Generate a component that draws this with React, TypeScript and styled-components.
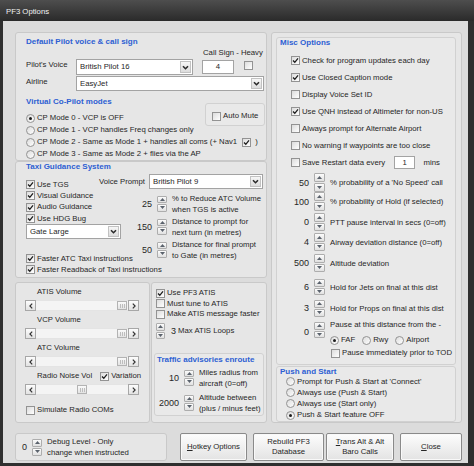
import React from 'react'
import styled, { createGlobalStyle } from 'styled-components'

const GlobalStyle = createGlobalStyle`
  html, body { margin: 0; padding: 0; background: #2f2f2f; }
  * { box-sizing: border-box; }
`

const Window = styled.div`
  width: 474px;
  height: 466px;
  display: flex;
  flex-direction: column;
  background: #2f2f2f;
  font: 7.75px/10px "Liberation Sans", Arial, sans-serif;
  color: #262626;
  overflow: hidden;
`

const TitleBar = styled.div`
  height: 21px;
  flex: none;
  padding: 1px 0 0 6px;
  line-height: 21px;
  color: #f2f2f2;
  background: linear-gradient(#4e4e4e, #2a2a2a);
`

const Client = styled.div`
  flex: 1;
  margin: 0 6px 3px 3px;
  padding: 11px 6px 2px 12px;
  background: #dcdcdc;
  display: flex;
  flex-direction: column;
  gap: 10px;
`

const MainRow = styled.div`
  height: 391px;
  flex: none;
  display: flex;
  gap: 4px;
`

const LeftCol = styled.div`
  width: 253px;
  display: flex;
  flex-direction: column;
`

const Panel = styled.div<{ $pad?: string }>`
  background: #e6e6e6;
  border: 1px solid #c9c9c9;
  border-radius: 3px;
  padding: ${p => p.$pad ?? '0'};
`

const Group = styled.div`
  background: #e9e9e9;
  border: 1px solid #d1d1d1;
  border-radius: 3px;
`

const Heading = styled.div`
  font-weight: bold;
  font-size: 8px;
  line-height: 10px;
  color: #2d5fd3;
  white-space: nowrap;
`

/* ---------- small controls ---------- */

const Box = styled.span<{ $round?: boolean; $ml?: number; $mt?: number }>`
  width: 9px;
  height: 9px;
  flex: none;
  display: flex;
  align-items: center;
  justify-content: center;
  border: 1px solid #939393;
  border-radius: ${p => (p.$round ? '50%' : '0')};
  background: linear-gradient(135deg, #dcdcdc, #ffffff);
  margin-left: ${p => p.$ml ?? 0}px;
  margin-top: ${p => p.$mt ?? 0}px;
`

const Dot = styled.span`
  width: 3px;
  height: 3px;
  border-radius: 50%;
  background: #1c1c1c;
`

const Tick = () => (
  <svg width="7" height="7" viewBox="0 0 7 7">
    <path d="M1 3.5L2.8 5.3L6 1.3" stroke="#1c1c1c" strokeWidth="1.3" fill="none" />
  </svg>
)

const CheckBox = ({ on, ml, mt }: { on?: boolean; ml?: number; mt?: number }) => (
  <Box $ml={ml} $mt={mt}>{on && <Tick />}</Box>
)

const RadioBtn = ({ on }: { on?: boolean }) => <Box $round>{on && <Dot />}</Box>

const OptLine = styled.div<{ $h?: number; $ml?: number; $mt?: number }>`
  display: flex;
  align-items: center;
  gap: 2px;
  white-space: nowrap;
  height: ${p => (p.$h ? `${p.$h}px` : 'auto')};
  margin-left: ${p => p.$ml ?? 0}px;
  margin-top: ${p => p.$mt ?? 0}px;
`

const Check = ({ on, h, ml, mt, children }: { on?: boolean; h?: number; ml?: number; mt?: number; children: React.ReactNode }) => (
  <OptLine $h={h} $ml={ml} $mt={mt}>
    <CheckBox on={on} />
    <span>{children}</span>
  </OptLine>
)

const Radio = ({ on, h, ml, children }: { on?: boolean; h?: number; ml?: number; children: React.ReactNode }) => (
  <OptLine $h={h} $ml={ml}>
    <RadioBtn on={on} />
    <span>{children}</span>
  </OptLine>
)

const SelectBox = styled.div<{ $w: number; $h: number }>`
  width: ${p => p.$w}px;
  height: ${p => p.$h}px;
  flex: none;
  display: flex;
  background: #fff;
  border: 1px solid #a3a3a3;
`

const SelectText = styled.span`
  flex: 1;
  padding-left: 3px;
  display: flex;
  align-items: center;
  white-space: nowrap;
`

const SelectBtn = styled.span`
  width: 11px;
  margin: 1px;
  display: flex;
  align-items: center;
  justify-content: center;
  border: 1px solid #c2c2c2;
  background: linear-gradient(#f7f7f7, #dcdcdc);
`

const Select = ({ w, h = 15, children }: { w: number; h?: number; children: React.ReactNode }) => (
  <SelectBox $w={w} $h={h}>
    <SelectText>{children}</SelectText>
    <SelectBtn>
      <svg width="7" height="5" viewBox="0 0 7 5">
        <path d="M1 1.2L3.5 3.7L6 1.2" stroke="#2a2a2a" strokeWidth="1.6" fill="none" />
      </svg>
    </SelectBtn>
  </SelectBox>
)

const TextBox = styled.div<{ $w: number; $h: number; $ml?: number; $mt?: number }>`
  width: ${p => p.$w}px;
  height: ${p => p.$h}px;
  flex: none;
  margin-left: ${p => p.$ml ?? 0}px;
  margin-top: ${p => p.$mt ?? 0}px;
  background: #fff;
  border: 1px solid #a3a3a3;
  text-align: center;
  line-height: ${p => p.$h - 2}px;
`

const SpinBox = styled.div<{ $w: number; $h: number; $mt?: number }>`
  width: ${p => p.$w}px;
  height: ${p => p.$h}px;
  margin-top: ${p => p.$mt ?? 0}px;
  display: flex;
  flex-direction: column;
  gap: 1px;
`

const SpinBtn = styled.div`
  flex: 1;
  display: flex;
  align-items: center;
  justify-content: center;
  border: 1px solid #adadad;
  border-radius: 1px;
  background: linear-gradient(#fcfcfc, #e0e0e0);
`

const Spinner = ({ w = 10, h = 16, mt }: { w?: number; h?: number; mt?: number }) => (
  <SpinBox $w={w} $h={h} $mt={mt}>
    <SpinBtn>
      <svg width="5" height="3" viewBox="0 0 5 3"><path d="M0 3L2.5 0L5 3Z" fill="#5a626c" /></svg>
    </SpinBtn>
    <SpinBtn>
      <svg width="5" height="3" viewBox="0 0 5 3"><path d="M0 0L2.5 3L5 0Z" fill="#5a626c" /></svg>
    </SpinBtn>
  </SpinBox>
)

const SpinRow = styled.div<{ $vw: number; $h: number; $mt?: number }>`
  display: grid;
  grid-template-columns: ${p => p.$vw}px auto 1fr;
  column-gap: 5px;
  align-items: center;
  height: ${p => p.$h}px;
  margin-top: ${p => p.$mt ?? 0}px;
`

const SpinValue = styled.span<{ $mt?: number }>`
  text-align: right;
  font-size: 9px;
  line-height: 10px;
  margin-top: ${p => p.$mt ?? 0}px;
`

const SpinText = styled.span`
  line-height: 11px;
  white-space: nowrap;
`

const Scroll = styled.div`
  height: 11px;
  display: flex;
  background: #f4f4f4;
`

const ScrollBtn = styled.span`
  width: 11px;
  flex: none;
  display: flex;
  align-items: center;
  justify-content: center;
  border: 1px solid #a7a7a7;
  background: linear-gradient(#fdfdfd, #e2e2e2);
`

const Track = styled.span`
  flex: 1;
  display: flex;
  align-items: center;
  border-top: 1px solid #e4e4e4;
  border-bottom: 1px solid #e4e4e4;
`

const Thumb = styled.span<{ $pos: number }>`
  width: 10px;
  height: 9px;
  flex: none;
  margin-left: calc((100% - 10px) * ${p => p.$pos});
  display: flex;
  align-items: center;
  justify-content: center;
  border: 1px solid #b3b3b3;
  background: linear-gradient(#fafafa, #e3e3e3);
`

const ScrollBar = ({ pos }: { pos: number }) => (
  <Scroll>
    <ScrollBtn>
      <svg width="4" height="6" viewBox="0 0 4 6"><path d="M3.2 0.6L0.9 3L3.2 5.4" stroke="#333" strokeWidth="1.2" fill="none" /></svg>
    </ScrollBtn>
    <Track>
      <Thumb $pos={pos}>
        <svg width="5" height="4" viewBox="0 0 5 4">
          <path d="M0.5 0V4M2.5 0V4M4.5 0V4" stroke="#bdbdbd" strokeWidth="1" />
        </svg>
      </Thumb>
    </Track>
    <ScrollBtn>
      <svg width="4" height="6" viewBox="0 0 4 6"><path d="M0.8 0.6L3.1 3L0.8 5.4" stroke="#333" strokeWidth="1.2" fill="none" /></svg>
    </ScrollBtn>
  </Scroll>
)

/* ---------- pilot / vcp panel ---------- */

const CallSignLabel = styled.div`
  margin: 1px 0 0 177px;
  white-space: nowrap;
`

const FieldRow = styled.div<{ $mt?: number }>`
  display: flex;
  align-items: flex-start;
  margin-top: ${p => p.$mt ?? 0}px;
`

const FieldLabel = styled.span`
  width: 50px;
  flex: none;
  padding-top: 1px;
  white-space: nowrap;
`

const VcpGrid = styled.div`
  display: grid;
  grid-template-columns: 1fr 60px;
  grid-template-rows: 15px repeat(4, 12px);
  margin-top: 6px;
`

const AutoMuteBox = styled(Group)`
  grid-column: 2;
  grid-row: 1 / 3;
  align-self: start;
  margin-top: 6px;
  height: 23px;
  display: flex;
  align-items: center;
  gap: 2px;
  padding: 3px 0 0 6px;
`

const ModeRow = styled.div<{ $row: number; $full?: boolean }>`
  grid-row: ${p => p.$row};
  grid-column: ${p => (p.$full ? '1 / 3' : '1')};
  display: flex;
  align-items: center;
  gap: 2px;
  white-space: nowrap;
`

/* ---------- taxi panel ---------- */

const TaxiGrid = styled.div`
  display: grid;
  grid-template-columns: 107px 1fr;
  grid-template-rows: 15px auto;
  margin-top: 2px;
`

const TaxiChecks = styled.div`
  grid-column: 1 / 3;
  grid-row: 1 / 3;
  padding-top: 5px;
  display: flex;
  flex-direction: column;
`

const VoiceRow = styled.div`
  grid-column: 1 / 3;
  grid-row: 1;
  justify-self: end;
  display: flex;
  align-items: center;
  gap: 4px;
  white-space: nowrap;
`

const TaxiSpins = styled.div`
  grid-column: 2;
  grid-row: 2;
  padding-top: 3px;
`

/* ---------- lower panels ---------- */

const LowerRow = styled.div`
  flex: 1;
  margin-top: 4px;
  display: flex;
  gap: 1px;
`

const VolumePanel = styled(Panel)`
  width: 135px;
  flex: none;
  padding: 4px 10px 0 9px;
  display: flex;
  flex-direction: column;
`

const VolLabel = styled.div<{ $mt?: number }>`
  margin: ${p => p.$mt ?? 0}px 0 3px 12px;
  height: 10px;
  white-space: nowrap;
`

const NoiseRow = styled.div`
  display: flex;
  align-items: center;
  gap: 8px;
  margin: 4px 0 3px 12px;
  height: 10px;
  white-space: nowrap;
`

const AtisPanel = styled(Panel)`
  flex: 1;
  padding: 5px 2px 0 2px;
  display: flex;
  flex-direction: column;
`

const LoopsRow = styled.div`
  display: flex;
  align-items: center;
  margin: 3px 0 0 2px;
  height: 17px;
  white-space: nowrap;
`

const LoopsValue = styled.span`
  font-size: 9px;
  margin: 0 2px 0 6px;
`

const TrafficBox = styled(Group)`
  margin-top: 13px;
  height: 63px;
  padding: 1px 2px 0 2px;
`

/* ---------- right side ---------- */

const RightPanel = styled(Panel)`
  flex: 1;
  padding: 4px 5px 0 4px;
  display: flex;
  flex-direction: column;
  gap: 1px;
`

const MiscGroup = styled(Group)`
  flex: 1;
  padding: 0 3px;
`

const MiscList = styled.div`
  margin: 4px 0 0 11px;
`

const PauseBlock = styled.div`
  display: grid;
  grid-template-columns: 29px auto 1fr;
  column-gap: 5px;
  align-items: start;
  margin-top: 2px;
`

const PauseStack = styled.div`
  display: flex;
  flex-direction: column;
  white-space: nowrap;
`

const RadioLine = styled.div`
  display: flex;
  gap: 7px;
  margin-top: 5px;
`

const PushGroup = styled(Group)`
  height: 56px;
  flex: none;
  padding: 0 3px;
`

const PushHeading = styled(Heading)`
  line-height: 9px;
`

/* ---------- bottom row ---------- */

const BottomRow = styled.div`
  height: 28px;
  flex: none;
  display: flex;
`

const DebugPanel = styled(Panel)`
  width: 152px;
  flex: none;
  padding: 0 4px;
  display: flex;
  align-items: center;
`

const Btn = styled.div<{ $w: number; $ml: number }>`
  width: ${p => p.$w}px;
  margin-left: ${p => p.$ml}px;
  flex: none;
  display: flex;
  align-items: center;
  justify-content: center;
  text-align: center;
  line-height: 10px;
  border: 1px solid #8a8a8a;
  border-radius: 2px;
  background: linear-gradient(#fdfdfd, #e3e3e3);
  box-shadow: inset 0 0 0 1px #f9f9f9;
`

const U = styled.span`
  text-decoration: underline;
`

export default function App() {
  return (
    <>
      <GlobalStyle />
      <Window>
        <TitleBar>PF3 Options</TitleBar>
        <Client>
          <MainRow>
            <LeftCol>
              <Panel $pad="4px 1px 0 10px">
                <Heading>Default Pilot voice &amp; call sign</Heading>
                <CallSignLabel>Call Sign - Heavy</CallSignLabel>
                <FieldRow $mt={1}>
                  <FieldLabel>Pilot's Voice</FieldLabel>
                  <Select w={117} h={16}>British Pilot 16</Select>
                  <TextBox $w={32} $h={14} $ml={9} $mt={1}>4</TextBox>
                  <CheckBox ml={10} mt={2} />
                </FieldRow>
                <FieldRow $mt={1}>
                  <FieldLabel>Airline</FieldLabel>
                  <Select w={188}>EasyJet</Select>
                </FieldRow>
                <VcpGrid>
                  <Heading>Virtual Co-Pilot modes</Heading>
                  <AutoMuteBox>
                    <CheckBox />
                    <span>Auto Mute</span>
                  </AutoMuteBox>
                  <ModeRow $row={2}>
                    <RadioBtn on />
                    <span>CP Mode 0 - VCP is OFF</span>
                  </ModeRow>
                  <ModeRow $row={3}>
                    <RadioBtn />
                    <span>CP Mode 1 - VCP handles Freq changes only</span>
                  </ModeRow>
                  <ModeRow $row={4} $full>
                    <RadioBtn />
                    <span>CP Mode 2 - Same as Mode 1 + handles all coms (+ Nav1</span>
                    <CheckBox on ml={3} />
                    <span>&nbsp;)</span>
                  </ModeRow>
                  <ModeRow $row={5}>
                    <RadioBtn />
                    <span>CP Mode 3 - Same as Mode 2 + flies via the AP</span>
                  </ModeRow>
                </VcpGrid>
              </Panel>

              <Panel $pad="0 3px 2px 10px">
                <Heading>Taxi Guidance System</Heading>
                <TaxiGrid>
                  <TaxiChecks>
                    <Check on h={11.3}>Use TGS</Check>
                    <Check on h={11.3}>Visual Guidance</Check>
                    <Check on h={11.3}>Audio Guidance</Check>
                    <Check on h={11.3}>Use HDG Bug</Check>
                    <Select w={95}>Gate Large</Select>
                    <Check on h={11} mt={14}>Faster ATC Taxi instructions</Check>
                    <Check on h={11}>Faster Readback of Taxi instructions</Check>
                  </TaxiChecks>
                  <VoiceRow>
                    <span>Voice Prompt</span>
                    <Select w={114}>British Pilot 9</Select>
                  </VoiceRow>
                  <TaxiSpins>
                    <SpinRow $vw={19} $h={23}>
                      <SpinValue>25</SpinValue>
                      <Spinner />
                      <SpinText>% to Reduce ATC Volume<br />when TGS is active</SpinText>
                    </SpinRow>
                    <SpinRow $vw={19} $h={23}>
                      <SpinValue>150</SpinValue>
                      <Spinner />
                      <SpinText>Distance to prompt for<br />next turn (in metres)</SpinText>
                    </SpinRow>
                    <SpinRow $vw={19} $h={23}>
                      <SpinValue>50</SpinValue>
                      <Spinner />
                      <SpinText>Distance for final prompt<br />to Gate (in metres)</SpinText>
                    </SpinRow>
                  </TaxiSpins>
                </TaxiGrid>
              </Panel>

              <LowerRow>
                <VolumePanel>
                  <VolLabel>ATIS Volume</VolLabel>
                  <ScrollBar pos={0.99} />
                  <VolLabel $mt={4}>VCP Volume</VolLabel>
                  <ScrollBar pos={0.99} />
                  <VolLabel $mt={4}>ATC Volume</VolLabel>
                  <ScrollBar pos={0.99} />
                  <NoiseRow>
                    <span>Radio Noise Vol</span>
                    <Check on>Variation</Check>
                  </NoiseRow>
                  <ScrollBar pos={0.5} />
                  <Check h={10} ml={1} mt={10}>Simulate Radio COMs</Check>
                </VolumePanel>

                <AtisPanel>
                  <Check on h={10.5} ml={2}>Use PF3 ATIS</Check>
                  <Check h={10.5} ml={2}>Must tune to ATIS</Check>
                  <Check h={10.5} ml={2}>Make ATIS message faster</Check>
                  <LoopsRow>
                    <Spinner w={9} h={16} />
                    <LoopsValue>3</LoopsValue>
                    <span>Max ATIS Loops</span>
                  </LoopsRow>
                  <TrafficBox>
                    <Heading>Traffic advisories enroute</Heading>
                    <SpinRow $vw={22} $h={16} $mt={2}>
                      <SpinValue>10</SpinValue>
                      <Spinner />
                      <SpinText>Miles radius from<br />aircraft (0=off)</SpinText>
                    </SpinRow>
                    <SpinRow $vw={22} $h={16} $mt={9}>
                      <SpinValue>2000</SpinValue>
                      <Spinner />
                      <SpinText>Altitude between<br />(plus / minus feet)</SpinText>
                    </SpinRow>
                  </TrafficBox>
                </AtisPanel>
              </LowerRow>
            </LeftCol>

            <RightPanel>
              <MiscGroup>
                <Heading>Misc Options</Heading>
                <MiscList>
                  <Check on h={17}>Check for program updates each day</Check>
                  <Check on h={17}>Use Closed Caption mode</Check>
                  <Check h={17}>Display Voice Set ID</Check>
                  <Check on h={17}>Use QNH instead of Altimeter for non-US</Check>
                  <Check h={17}>Always prompt for Alternate Airport</Check>
                  <Check h={17}>No warning if waypoints are too close</Check>
                  <OptLine $h={17}>
                    <CheckBox />
                    <span>Save Restart data every</span>
                    <TextBox $w={21} $h={13} $ml={7}>1</TextBox>
                    <span>&nbsp;&nbsp;&nbsp;mins</span>
                  </OptLine>
                </MiscList>
                <SpinRow $vw={29} $h={19} $mt={2}>
                  <SpinValue>50</SpinValue>
                  <Spinner w={11} h={19} />
                  <SpinText>% probability of a 'No Speed' call</SpinText>
                </SpinRow>
                <SpinRow $vw={29} $h={19}>
                  <SpinValue>100</SpinValue>
                  <Spinner w={11} h={19} />
                  <SpinText>% probability of Hold (if selected)</SpinText>
                </SpinRow>
                <SpinRow $vw={29} $h={20} $mt={1}>
                  <SpinValue>0</SpinValue>
                  <Spinner w={11} h={18} />
                  <SpinText>PTT pause interval in secs (0=off)</SpinText>
                </SpinRow>
                <SpinRow $vw={29} $h={20}>
                  <SpinValue>4</SpinValue>
                  <Spinner w={11} h={18} />
                  <SpinText>Airway deviation distance (0=off)</SpinText>
                </SpinRow>
                <SpinRow $vw={29} $h={20} $mt={1}>
                  <SpinValue>500</SpinValue>
                  <Spinner w={11} h={18} />
                  <SpinText>Altitude deviation</SpinText>
                </SpinRow>
                <SpinRow $vw={29} $h={20} $mt={4}>
                  <SpinValue>6</SpinValue>
                  <Spinner w={11} h={16} />
                  <SpinText>Hold for Jets on final at this dist</SpinText>
                </SpinRow>
                <SpinRow $vw={29} $h={20} $mt={1}>
                  <SpinValue>3</SpinValue>
                  <Spinner w={11} h={17} />
                  <SpinText>Hold for Props on final at this dist</SpinText>
                </SpinRow>
                <PauseBlock>
                  <SpinValue $mt={7}>0</SpinValue>
                  <Spinner w={11} h={16} mt={2} />
                  <PauseStack>
                    <span>Pause at this distance from the -</span>
                    <RadioLine>
                      <Radio on>FAF</Radio>
                      <Radio>Rwy</Radio>
                      <Radio>Airport</Radio>
                    </RadioLine>
                    <Check h={10} ml={1} mt={3}>Pause immediately prior to TOD</Check>
                  </PauseStack>
                </PauseBlock>
              </MiscGroup>

              <PushGroup>
                <PushHeading>Push and Start</PushHeading>
                <Radio h={11.2} ml={6}>Prompt for Push &amp; Start at 'Connect'</Radio>
                <Radio h={11.2} ml={6}>Always use (Push &amp; Start)</Radio>
                <Radio h={11.2} ml={6}>Always use (Start only)</Radio>
                <Radio on h={11.2} ml={6}>Push &amp; Start feature OFF</Radio>
              </PushGroup>
            </RightPanel>
          </MainRow>

          <BottomRow>
            <DebugPanel>
              <SpinRow $vw={7} $h={26}>
                <SpinValue>0</SpinValue>
                <Spinner h={17} />
                <SpinText>Debug Level - Only<br />change when instructed</SpinText>
              </SpinRow>
            </DebugPanel>
            <Btn $w={67} $ml={13}><span><U>H</U>otkey Options</span></Btn>
            <Btn $w={71} $ml={6}><span>Rebuild PF3<br />Database</span></Btn>
            <Btn $w={68} $ml={2}><span><U>T</U>rans Alt &amp; Alt<br />Baro Calls</span></Btn>
            <Btn $w={62} $ml={6}><span><U>C</U>lose</span></Btn>
          </BottomRow>
        </Client>
      </Window>
    </>
  )
}
